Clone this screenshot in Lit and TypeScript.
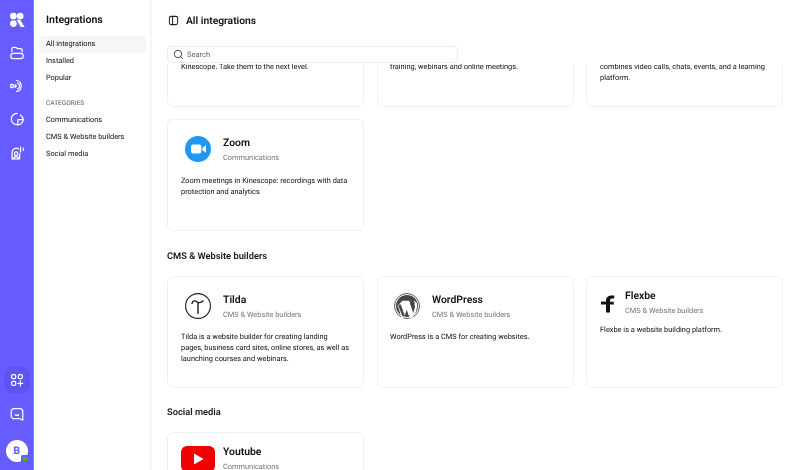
import { LitElement, css, html, svg } from "lit";
import { customElement } from "lit/decorators.js";

const LOGOS: Record<string, unknown> = {
  zoom: html`<svg width="26" height="26" viewBox="0 0 26 26">
    <circle cx="13" cy="13" r="13" fill="#2196f3" />
    <rect x="6" y="8.6" width="10.4" height="8.8" rx="2" fill="#fff" />
    <path d="M17.4 12l3-2.4c.3-.2.6 0 .6.3v6.2c0 .3-.3.5-.6.3l-3-2.4z" fill="#fff" />
  </svg>`,
  tilda: html`<svg width="26" height="26" viewBox="0 0 26 26">
    <circle cx="13" cy="13" r="12.4" fill="#fff" stroke="#1a1a1a" stroke-width="1.1" />
    <path d="M7 11c.1-2.200 1.300-3.300 2.800-3.100 1.500.2 2.300 1.500 3.700 1.700 1.500.2 3.500-.4 5-2.100" fill="none" stroke="#1a1a1a" stroke-width="1.3" />
    <path d="M13 9.500V20.700" fill="none" stroke="#1a1a1a" stroke-width="1.4" />
  </svg>`,
  wordpress: html`<svg width="26" height="26" viewBox="0 0 26 26">
    <circle cx="13" cy="13" r="12.5" fill="#fff" stroke="#5a5a5a" stroke-width="1" />
    <circle cx="13" cy="13" r="11" fill="#464646" />
    <path d="M3.9 11.6l5 13 2.2-.9-4.300-12.300zM8.400 7.800h8.800v1.500l-1.600.2 3.700 10.600 1.100-3.900c.9-2.800.7-4.200-.6-6.300l-.2-2.300 3 1.900.7 3.800-1.400 5.500-3.700 5.900-2.100.7-3.300-9-3.100 9-2.200-.4-3.300-11.300-1.300-.2zM12 8.900l3.700 10.400-1.100 3-3.700-10.500-.6-2.700z" fill="#fff" />
    <path d="M14.400 7.500h4.500l2.400 2.700-1.400.8-1.800.2z" fill="#464646" />
  </svg>`,
  flexbe: html`<svg width="16" height="20" viewBox="0 0 16 20">
    <path d="M6 19.500V7.800c0-3.900 2.300-5.800 8.200-5.300v3c-3-.2-4.200.3-4.200 2.300v1h3.700v2.700H10v8z" fill="#111" />
    <rect x="1" y="8.600" width="6" height="2.900" fill="#111" />
  </svg>`,
  youtube: html`<svg width="34" height="26" viewBox="0 0 34 26">
    <rect width="34" height="26" rx="6" fill="#f00000" />
    <path d="M13 7.500l9.500 5.500-9.500 5.500z" fill="#fff" />
  </svg>`,
};

type Integration = {
  name?: string;
  cat?: string;
  logo?: string;
  text: unknown;
  tight?: boolean;
  narrow?: boolean;
};

const BLANK = html`&nbsp;<br />`;

const TOP: Integration[] = [
  { text: html`${BLANK}Kinescope. Take them to the next level.` },
  { text: html`${BLANK}training, webinars and online meetings.` },
  { text: html`${BLANK}combines video calls, chats, events, and a learning platform.` },
];

const COMMS: Integration[] = [
  {
    name: "Zoom",
    cat: "Communications",
    logo: "zoom",
    text: "Zoom meetings in Kinescope: recordings with data protection and analytics",
  },
];

const CMS: Integration[] = [
  {
    name: "Tilda",
    cat: "CMS & Website builders",
    logo: "tilda",
    text: "Tilda is a website builder for creating landing pages, business card sites, online stores, as well as launching courses and webinars.",
  },
  {
    name: "WordPress",
    cat: "CMS & Website builders",
    logo: "wordpress",
    text: "WordPress is a CMS for creating websites.",
  },
  {
    name: "Flexbe",
    cat: "CMS & Website builders",
    logo: "flexbe",
    text: "Flexbe is a website building platform.",
    tight: true,
    narrow: true,
  },
];

const SOCIAL: Integration[] = [
  { name: "Youtube", cat: "Communications", logo: "youtube", text: "", tight: true },
];

const railIcon = (body: unknown) => html`<svg width="16" height="16" viewBox="0 0 18 18" fill="none"
  stroke="#fff" stroke-width="1.400" stroke-linecap="round" stroke-linejoin="round">${body}</svg>`;

const RAIL_TOP = [
  svg`<path d="M3.200 7.500V4.300c0-1 .7-1.700 1.700-1.700h2.600c.8 0 1.100.6 1.600 1.100.3.300.6.500 1.100.500h3c1 0 1.600.7 1.600 1.700v1.600" />
      <rect x="2" y="9.500" width="14" height="5.800" rx="2.700" />`,
  svg`<path d="M8.500 2.800a6.300 6.300 0 0 1 0 12.400" />
      <path d="M9.500 5.800a3.300 3.300 0 0 1 0 6.400" />
      <path d="M2 7.200l1.500 0c.8 0 1.500.8 1.500 1.800s-.7 1.800-1.500 1.800H2z" />
      <path d="M6.800 7.600l1.500 1.400-1.500 1.400z" fill="#fff" />`,
  svg`<path d="M9 2.800a6.300 6.300 0 1 0 1 12.500" />
      <path d="M15.800 9.500a6.300 6.300 0 0 0-3-5" />
      <path d="M10 9.800h6c0 2.500-2.500 5.700-6 5.700z" />`,
  svg`<path d="M3.500 15.500V8.200a4.700 4.700 0 0 1 7.500-3.700" />
      <path d="M3.500 15.500h8.500V10" />
      <circle cx="8" cy="9.800" r="2" />
      <path d="M5.500 15.500c0-1.700 1-2.800 2.500-2.800s2.500 1.100 2.500 2.800" />
      <path d="M13 2.500v5.500M16 3.500v2.500" />`,
];

@customElement("app-root")
export class AppRoot extends LitElement {
  static styles = css`
    :host {
      display: flex;
      width: 100%;
      height: 100vh;
      overflow: hidden;
      background: #fff;
      color: #1d1d1f;
      font-family: Roboto, "Liberation Sans", sans-serif;
      text-rendering: geometricPrecision;
    }
    .rail {
      flex: none;
      width: 34px;
      box-sizing: border-box;
      background: #665cff;
      border-right: 1px solid #7d75ff;
      display: flex;
      flex-direction: column;
      align-items: center;
      padding: 6.500px 0 8.300px;
    }
    .rail-btn {
      width: 26px;
      height: 26px;
      border-radius: 8px;
      display: flex;
      align-items: center;
      justify-content: center;
      margin-bottom: 7.300px;
    }
    .rail-btn.active {
      background: #5e54ef;
      margin-bottom: 8px;
    }
    .spacer {
      flex: 1;
    }
    .avatar {
      position: relative;
      width: 22px;
      height: 22px;
      margin-top: 5.400px;
      border-radius: 50%;
      background: #fff;
      color: #665cff;
      font-size: 10.500px;
      font-weight: 700;
      display: flex;
      align-items: center;
      justify-content: center;
    }
    .dot {
      position: absolute;
      right: -1px;
      bottom: -1px;
      width: 4px;
      height: 4px;
      border: 2px solid #665cff;
      border-radius: 2px;
      background: #54b02c;
    }
    .side {
      flex: none;
      width: 116px;
      box-sizing: border-box;
      padding: 12px 4px 0 5px;
    }
    .side h1 {
      margin: 0 0 9px 7px;
      font-size: 10.500px;
      line-height: 15px;
      font-weight: 600;
      color: #111113;
      will-change: transform;
    }
    .nav {
      height: 16.800px;
      padding-left: 7px;
      border-radius: 4px;
      font-size: 7.400px;
      line-height: 16.800px;
      color: #0f0f11;
      will-change: transform;
    }
    .nav.active {
      background: #f6f6f6;
    }
    .label {
      margin: 9px 0 0 7px;
      height: 17px;
      font-size: 6.500px;
      line-height: 17px;
      font-weight: 500;
      color: #77777c;
      will-change: transform;
    }
    .main {
      flex: 1;
      min-width: 0;
      display: flex;
      flex-direction: column;
      overflow: hidden;
      border-left: 2px solid #f6f6f6;
    }
    .head {
      position: relative;
      z-index: 1;
      flex: none;
      height: 63.500px;
      box-sizing: border-box;
      padding: 13px 0 0 15px;
      background: #fff;
    }
    .head-row {
      display: flex;
      align-items: center;
      gap: 7px;
      height: 15px;
      padding-left: 1px;
      font-size: 10.300px;
      font-weight: 600;
      color: #111113;
      will-change: transform;
    }
    .search {
      display: flex;
      align-items: center;
      gap: 2.700px;
      width: 291px;
      height: 17.500px;
      box-sizing: border-box;
      margin-top: 17.500px;
      padding-left: 5px;
      border: 1px solid #ededef;
      border-radius: 4px;
      background: #fff;
      font-size: 7.500px;
      color: #66666b;
    }
    .search span {
      will-change: transform;
    }
    .scroll {
      flex: 1;
      min-height: 0;
      overflow: hidden;
      padding: 0 15px;
    }
    .content {
      margin-top: -68.800px;
    }
    .grid {
      display: grid;
      grid-template-columns: repeat(3, 197px);
      column-gap: 12.500px;
      row-gap: 12.500px;
    }
    .card {
      height: 112px;
      box-sizing: border-box;
      border: 1px solid #f1f1f3;
      border-radius: 6px;
      padding: 0 12.500px;
      background: #fff;
    }
    .card-head {
      display: flex;
      align-items: center;
      height: 54.400px;
      padding-top: 3.600px;
      box-sizing: border-box;
    }
    .card.tight .card-head {
      padding-top: 2.800px;
      height: 47px;
    }
    .logo {
      flex: none;
      width: 34px;
      height: 26px;
      margin-right: 8px;
      display: flex;
      justify-content: center;
      align-items: center;
    }
    .card.tight .logo {
      margin-top: 2px;
    }
    .card.narrow .logo {
      width: 16px;
      margin-right: 9px;
    }
    .card-title {
      will-change: transform;
    }
    .name {
      font-size: 10.400px;
      line-height: 15px;
      font-weight: 600;
      color: #111113;
    }
    .cat {
      margin-top: 1.600px;
      font-size: 7.400px;
      line-height: 11px;
      color: #77777c;
    }
    .desc {
      margin: 0;
      font-size: 7.400px;
      line-height: 11.200px;
      color: #0f0f11;
      will-change: transform;
    }
    .section {
      margin: 18.500px 0 13px;
      font-size: 9.300px;
      line-height: 13px;
      font-weight: 600;
      color: #19191c;
      will-change: transform;
    }
  `;

  private card(item: Integration) {
    return html`<div class="card ${item.tight ? "tight" : ""} ${item.narrow ? "narrow" : ""}">
      <div class="card-head">
        ${item.logo
          ? html`<div class="logo">${LOGOS[item.logo]}</div>
              <div class="card-title">
                <div class="name">${item.name}</div>
                <div class="cat">${item.cat}</div>
              </div>`
          : ""}
      </div>
      <p class="desc">${item.text}</p>
    </div>`;
  }

  render() {
    return html`
      <div class="rail">
        <div class="rail-btn">
          <svg width="16" height="16" viewBox="0 0 20 20" fill="#fff">
            <circle cx="5.500" cy="5" r="4.200" />
            <circle cx="5.500" cy="14.500" r="4.200" />
            <circle cx="14" cy="5" r="4.200" />
            <path d="M9.500 9.800h4.500l5.500 8.800h-5z" />
          </svg>
        </div>
        ${RAIL_TOP.map((icon) => html`<div class="rail-btn">${railIcon(icon)}</div>`)}
        <div class="spacer"></div>
        <div class="rail-btn active">
          ${railIcon(svg`<rect x="3" y="3" width="4.500" height="4.500" rx="1.300" />
            <rect x="10.500" y="3" width="4.500" height="4.500" rx="1.300" />
            <rect x="3" y="10.500" width="4.500" height="4.500" rx="1.300" />
            <path d="M12.800 10v5.500M10 12.800h5.500" />`)}
        </div>
        <div class="rail-btn">
          ${railIcon(svg`<path d="M5.500 3h7a3 3 0 0 1 3 3v10l-3-1.700h-7a3 3 0 0 1-3-3V6a3 3 0 0 1 3-3z" />
            <path d="M7 10c1.200.8 2.800.8 4 0" />`)}
        </div>
        <div class="avatar">B<span class="dot"></span></div>
      </div>
      <div class="side">
        <h1>Integrations</h1>
        <div class="nav active">All integrations</div>
        <div class="nav">Installed</div>
        <div class="nav">Popular</div>
        <div class="label">CATEGORIES</div>
        <div class="nav">Communications</div>
        <div class="nav">CMS &amp; Website builders</div>
        <div class="nav">Social media</div>
      </div>
      <div class="main">
        <div class="head">
          <div class="head-row">
            <svg width="11" height="11" viewBox="0 0 12 12" fill="none" stroke="#232326" stroke-width="1.100">
              <rect x="1.500" y="1.500" width="9" height="9" rx="2" />
              <path d="M5 1.500v9" />
            </svg>
            All integrations
          </div>
          <div class="search">
            <svg width="11" height="11" viewBox="0 0 11 11" fill="none" stroke="#4b4b50" stroke-width="1">
              <circle cx="5" cy="5" r="3.700" />
              <path d="M7.800 7.800l2 2" stroke-linecap="round" />
            </svg>
            <span>Search</span>
          </div>
        </div>
        <div class="scroll">
          <div class="content">
            <div class="grid">${TOP.map((c) => this.card(c))}${COMMS.map((c) => this.card(c))}</div>
            <div class="section">CMS &amp; Website builders</div>
            <div class="grid">${CMS.map((c) => this.card(c))}</div>
            <div class="section">Social media</div>
            <div class="grid">${SOCIAL.map((c) => this.card(c))}</div>
          </div>
        </div>
      </div>
    `;
  }
}
